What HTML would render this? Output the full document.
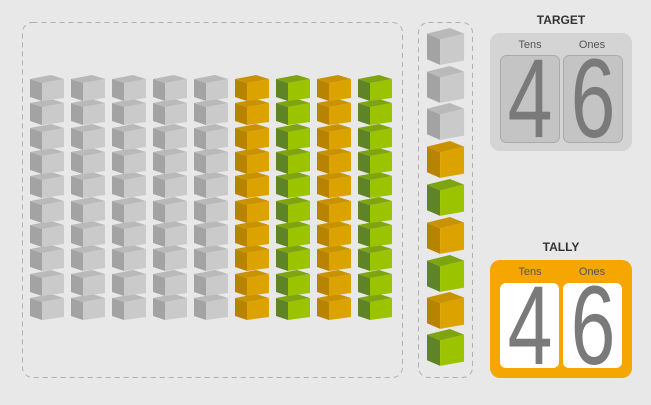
<!DOCTYPE html>
<html><head><style>
body{margin:0;width:651px;height:400px;background:#e8e8e8;overflow:hidden;font-family:"Liberation Sans",sans-serif}
</style></head><body>
<svg width="651" height="400" viewBox="0 0 651 400" xmlns="http://www.w3.org/2000/svg">
<defs>
<g id="g"><polygon points="0,4 12,8 12,26 0,22" fill="#a3a3a3"/><polygon points="12,8 34,4 34,23 12,26" fill="#cacaca"/><polygon points="0,4 21,0 34,4 12,8" fill="#b9b9b9"/></g>
<g id="o"><polygon points="0,4 12,8 12,26 0,22" fill="#b88300"/><polygon points="12,8 34,4 34,23 12,26" fill="#dca300"/><polygon points="0,4 21,0 34,4 12,8" fill="#c99200"/></g>
<g id="n"><polygon points="0,4 12,8 12,26 0,22" fill="#5f8427"/><polygon points="12,8 34,4 34,23 12,26" fill="#9bc300"/><polygon points="0,4 21,0 34,4 12,8" fill="#7ea40f"/></g>
</defs>
<rect x="22.5" y="22.5" width="380" height="355" rx="10" fill="none" stroke="#b0b0b0" stroke-dasharray="5,4"/>
<rect x="418.5" y="22.5" width="54" height="355" rx="10" fill="none" stroke="#b0b0b0" stroke-dasharray="5,4"/>
<text x="561" y="24" text-anchor="middle" font-weight="bold" font-size="12" fill="#333">TARGET</text>
<rect x="490" y="33" width="142" height="118" rx="10" fill="#d4d4d4"/>
<text x="530" y="48" text-anchor="middle" font-size="11" fill="#555">Tens</text>
<text x="592" y="48" text-anchor="middle" font-size="11" fill="#555">Ones</text>
<rect x="500.5" y="55.5" width="59" height="87" rx="6" fill="#c4c4c4" stroke="#aaa"/>
<rect x="563.5" y="55.5" width="59" height="87" rx="6" fill="#c4c4c4" stroke="#aaa"/>
<text transform="translate(530,137) scale(0.72,1)" text-anchor="middle" font-size="112" fill="#7a7a7a">4</text>
<text transform="translate(593,137) scale(0.72,1)" text-anchor="middle" font-size="112" fill="#7a7a7a">6</text>
<text x="561" y="251" text-anchor="middle" font-weight="bold" font-size="12" fill="#333">TALLY</text>
<rect x="490" y="260" width="142" height="118" rx="10" fill="#f5a600"/>
<text x="530" y="275" text-anchor="middle" font-size="11" fill="#555">Tens</text>
<text x="592" y="275" text-anchor="middle" font-size="11" fill="#555">Ones</text>
<rect x="500" y="283" width="59" height="85" rx="6" fill="#fff"/>
<rect x="563" y="283" width="59" height="85" rx="6" fill="#fff"/>
<text transform="translate(530,364) scale(0.72,1)" text-anchor="middle" font-size="112" fill="#7a7a7a">4</text>
<text transform="translate(593,364) scale(0.72,1)" text-anchor="middle" font-size="112" fill="#7a7a7a">6</text>
<g>
<use href="#g" x="30" y="294"/><use href="#g" x="30" y="270"/><use href="#g" x="30" y="245"/><use href="#g" x="30" y="221"/><use href="#g" x="30" y="197"/><use href="#g" x="30" y="172"/><use href="#g" x="30" y="148"/><use href="#g" x="30" y="124"/><use href="#g" x="30" y="99"/><use href="#g" x="30" y="75"/>
<use href="#g" x="71" y="294"/><use href="#g" x="71" y="270"/><use href="#g" x="71" y="245"/><use href="#g" x="71" y="221"/><use href="#g" x="71" y="197"/><use href="#g" x="71" y="172"/><use href="#g" x="71" y="148"/><use href="#g" x="71" y="124"/><use href="#g" x="71" y="99"/><use href="#g" x="71" y="75"/>
<use href="#g" x="112" y="294"/><use href="#g" x="112" y="270"/><use href="#g" x="112" y="245"/><use href="#g" x="112" y="221"/><use href="#g" x="112" y="197"/><use href="#g" x="112" y="172"/><use href="#g" x="112" y="148"/><use href="#g" x="112" y="124"/><use href="#g" x="112" y="99"/><use href="#g" x="112" y="75"/>
<use href="#g" x="153" y="294"/><use href="#g" x="153" y="270"/><use href="#g" x="153" y="245"/><use href="#g" x="153" y="221"/><use href="#g" x="153" y="197"/><use href="#g" x="153" y="172"/><use href="#g" x="153" y="148"/><use href="#g" x="153" y="124"/><use href="#g" x="153" y="99"/><use href="#g" x="153" y="75"/>
<use href="#g" x="194" y="294"/><use href="#g" x="194" y="270"/><use href="#g" x="194" y="245"/><use href="#g" x="194" y="221"/><use href="#g" x="194" y="197"/><use href="#g" x="194" y="172"/><use href="#g" x="194" y="148"/><use href="#g" x="194" y="124"/><use href="#g" x="194" y="99"/><use href="#g" x="194" y="75"/>
<use href="#o" x="235" y="294"/><use href="#o" x="235" y="270"/><use href="#o" x="235" y="245"/><use href="#o" x="235" y="221"/><use href="#o" x="235" y="197"/><use href="#o" x="235" y="172"/><use href="#o" x="235" y="148"/><use href="#o" x="235" y="124"/><use href="#o" x="235" y="99"/><use href="#o" x="235" y="75"/>
<use href="#n" x="276" y="294"/><use href="#n" x="276" y="270"/><use href="#n" x="276" y="245"/><use href="#n" x="276" y="221"/><use href="#n" x="276" y="197"/><use href="#n" x="276" y="172"/><use href="#n" x="276" y="148"/><use href="#n" x="276" y="124"/><use href="#n" x="276" y="99"/><use href="#n" x="276" y="75"/>
<use href="#o" x="317" y="294"/><use href="#o" x="317" y="270"/><use href="#o" x="317" y="245"/><use href="#o" x="317" y="221"/><use href="#o" x="317" y="197"/><use href="#o" x="317" y="172"/><use href="#o" x="317" y="148"/><use href="#o" x="317" y="124"/><use href="#o" x="317" y="99"/><use href="#o" x="317" y="75"/>
<use href="#n" x="358" y="294"/><use href="#n" x="358" y="270"/><use href="#n" x="358" y="245"/><use href="#n" x="358" y="221"/><use href="#n" x="358" y="197"/><use href="#n" x="358" y="172"/><use href="#n" x="358" y="148"/><use href="#n" x="358" y="124"/><use href="#n" x="358" y="99"/><use href="#n" x="358" y="75"/>
</g>
<g>
<use href="#g" transform="translate(427,28) scale(1.09,1.42)"/>
<use href="#g" transform="translate(427,66) scale(1.09,1.42)"/>
<use href="#g" transform="translate(427,103) scale(1.09,1.42)"/>
<use href="#o" transform="translate(427,141) scale(1.09,1.42)"/>
<use href="#n" transform="translate(427,179) scale(1.09,1.42)"/>
<use href="#o" transform="translate(427,217) scale(1.09,1.42)"/>
<use href="#n" transform="translate(427,255) scale(1.09,1.42)"/>
<use href="#o" transform="translate(427,292) scale(1.09,1.42)"/>
<use href="#n" transform="translate(427,329) scale(1.09,1.42)"/>
</g>
</svg>
</body></html>
